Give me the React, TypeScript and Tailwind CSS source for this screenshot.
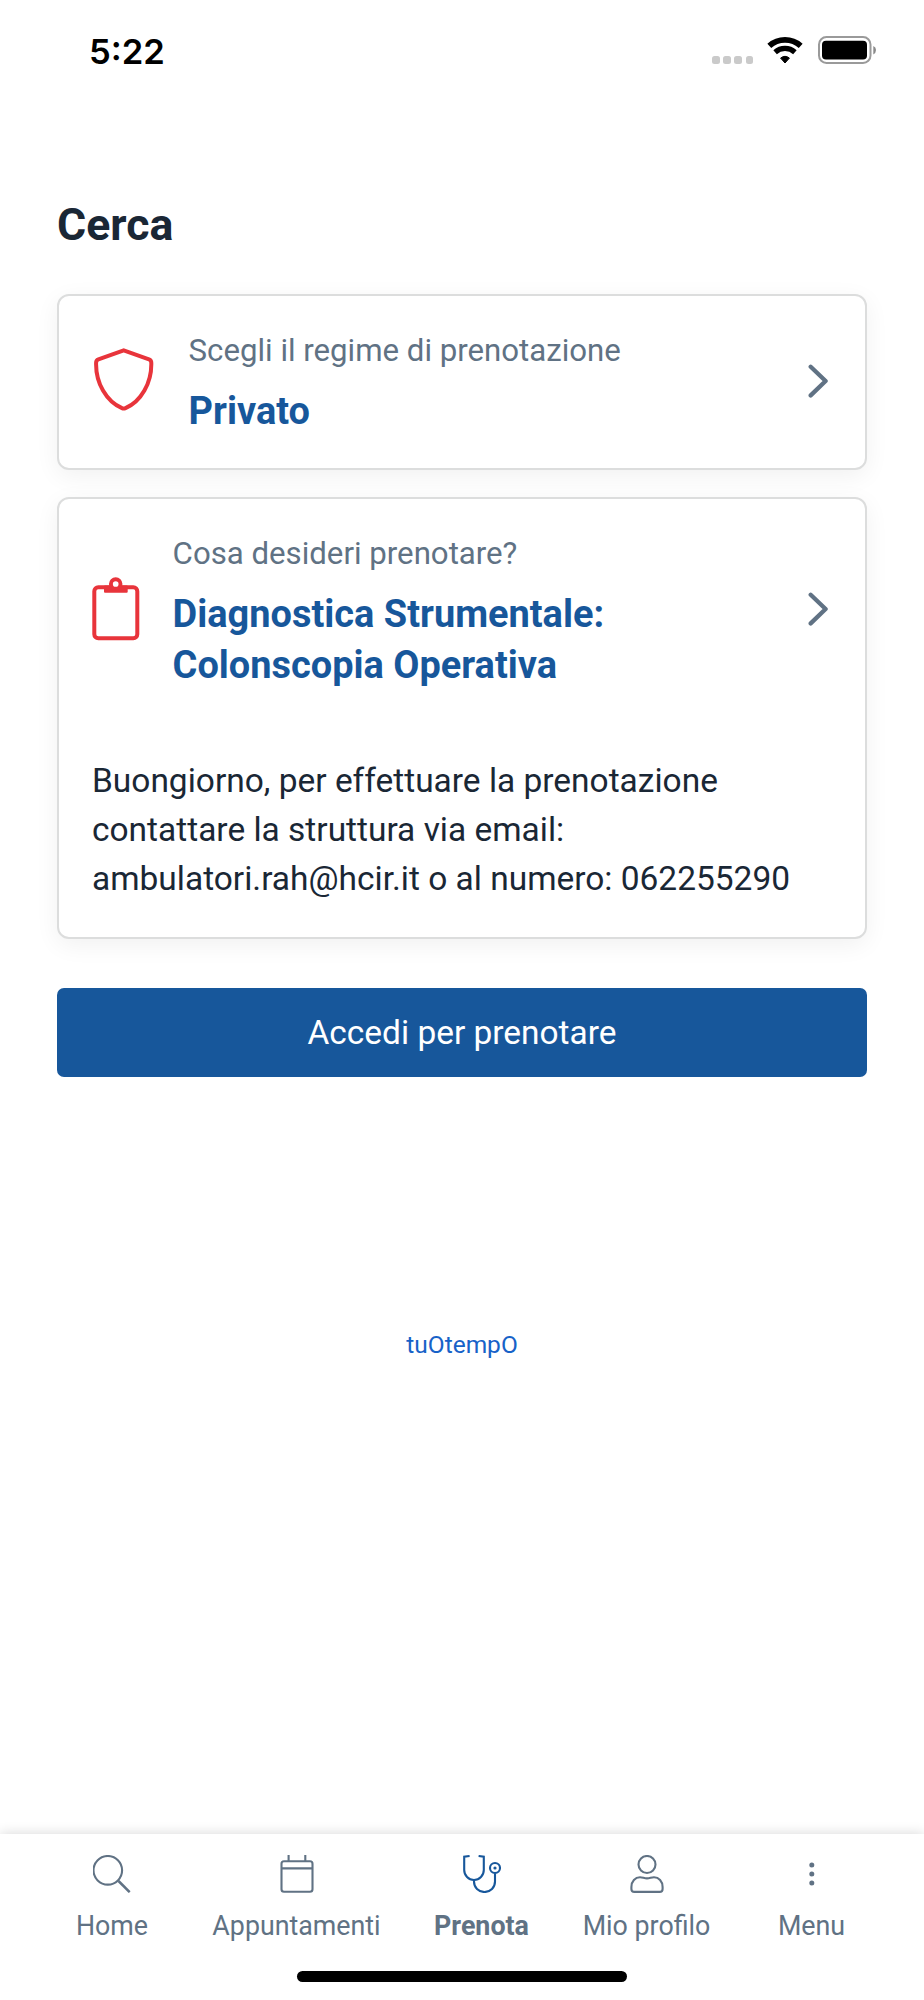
import React from 'react';

interface OptionRowProps {
  icon: React.ReactNode;
  label: string;
  value: React.ReactNode;
}

interface NavItemProps {
  label: string;
  className: string;
  active?: boolean;
  children: React.ReactNode;
}

function ShieldIcon() {
  return (
    <svg width="63" height="63" viewBox="0 0 63 63" className="shrink-0 -mt-[7px]" fill="none" stroke="#e8343b" strokeWidth="4" strokeLinejoin="round">
      <path d="M31.7 2.3 57 11.3Q59.3 12.2 59.3 14.7C59.8 35 49 53.5 33.5 60.2Q31.7 61 30 60.2C14.4 53.5 3.6 35 4.1 14.7Q4.1 12.2 6.4 11.3Z" />
    </svg>
  );
}

function ClipboardIcon() {
  return (
    <svg width="48" height="64" viewBox="0 0 48 64" className="shrink-0 -mt-[5px] -mr-px" fill="none">
      <rect x="2.3" y="10.2" width="43" height="51" rx="4" stroke="#e8343b" strokeWidth="4" />
      <rect x="12" y="8.4" width="23.7" height="7.4" rx="1" fill="#e8343b" />
      <circle cx="23.7" cy="7" r="4.8" fill="#fff" stroke="#e8343b" strokeWidth="3.9" />
    </svg>
  );
}

function ChevronIcon() {
  return (
    <svg width="20" height="34" viewBox="0 0 20 34" className="ml-auto shrink-0 -mt-[5px]" fill="none" stroke="#607284" strokeWidth="4.3" strokeLinecap="round" strokeLinejoin="round">
      <path d="M2.7 2.7 17.6 17 2.7 31.4" />
    </svg>
  );
}

function OptionRow({ icon, label, value }: OptionRowProps) {
  return (
    <div className="flex items-center pt-[34px] pb-[31px] pl-[33px] pr-[37px]">
      {icon}
      <div className="ml-[33.6px]">
        <p className="text-[31.2px] leading-[42px] text-[#607284]">{label}</p>
        <p className="mt-[14px] -mb-px text-[37.95px] leading-[51.4px] font-bold text-[#17579b]">{value}</p>
      </div>
      <ChevronIcon />
    </div>
  );
}

function NavItem({ label, className, active, children }: NavItemProps) {
  return (
    <button className={`flex flex-col items-center gap-[17px] ${className}`}>
      <svg width="38" height="38" viewBox="0 0 38 38" fill="none" stroke={active ? '#17579b' : '#607284'} strokeWidth="2.1">
        {children}
      </svg>
      <span className={active ? 'text-[26.8px] leading-8 font-bold' : 'text-[26.8px] leading-8'}>{label}</span>
    </button>
  );
}

function StatusBar() {
  return (
    <header className="flex h-[100px] items-start justify-between pl-[89px] pr-12 text-black">
      <span className="mt-[31px] font-['Inter',sans-serif] text-[34.6px] leading-10 font-semibold">5:22</span>
      <div className="mt-9 flex">
        <div className="mt-5 mr-[47px] flex w-[8px] gap-[3.6px]">
          <i className="size-[7.6px] shrink-0 rounded-[2.5px] bg-[#cacaca]" />
          <i className="size-[7.6px] shrink-0 rounded-[2.5px] bg-[#cacaca]" />
          <i className="size-[7.6px] shrink-0 rounded-[2.5px] bg-[#cacaca]" />
          <i className="size-[7.6px] shrink-0 rounded-[2.5px] bg-[#cacaca]" />
        </div>
        <svg width="36" height="28" viewBox="0 0 36 28" fill="none" stroke="#000">
          <path d="M2.3 9.9A23.7 23.7 0 0 1 33.7 9.9" strokeWidth="5.8" />
          <path d="M8.1 16.2A15 15 0 0 1 27.9 16.2" strokeWidth="5.3" />
          <path d="M18 27 13.6 22.1A7 7 0 0 1 22.4 22.1Z" fill="#000" strokeWidth="1" strokeLinejoin="round" />
        </svg>
        <svg width="58" height="28" viewBox="0 0 58 28" className="ml-[15px]">
          <rect x="1" y="1" width="51.5" height="26" rx="7.5" fill="none" stroke="#9a9a9a" strokeWidth="2" />
          <rect x="4" y="4.7" width="45" height="18.8" rx="4" />
          <path d="M55.3 10Q58 11 58 14T55.3 18.5Z" fill="#8a8a8a" />
        </svg>
      </div>
    </header>
  );
}

export default function App() {
  return (
    <div className="flex h-[2000px] w-[924px] flex-col overflow-hidden bg-white font-['Roboto',sans-serif] text-[#1a2735]">
      <StatusBar />

      <main className="flex flex-col px-[57px] pt-[98px]">
        <h1 className="text-[44.6px] leading-[54px] font-bold">Cerca</h1>

        <section className="mt-[42px] h-[176px] rounded-xl border-2 border-[#dcdddd] bg-white shadow-[0_6px_24px_rgba(0,0,0,0.06)]">
          <OptionRow icon={<ShieldIcon />} label="Scegli il regime di prenotazione" value="Privato" />
        </section>

        <section className="mt-[27px] h-[442px] rounded-xl border-2 border-[#dcdddd] bg-white shadow-[0_6px_24px_rgba(0,0,0,0.06)]">
          <OptionRow
            icon={<ClipboardIcon />}
            label="Cosa desideri prenotare?"
            value={
              <>
                Diagnostica Strumentale:
                <br />
                Colonscopia Operativa
              </>
            }
          />
          <p className="mt-[34px] px-[33px] text-[33.48px] leading-[49.2px]">
            Buongiorno, per effettuare la prenotazione
            <br />
            contattare la struttura via email:
            <br />
            ambulatori.rah@hcir.it o al numero: 062255290
          </p>
        </section>

        <button className="mt-[49px] h-[89px] rounded-[7px] bg-[#17579b] pt-0.5 text-[33.45px] text-white">
          Accedi per prenotare
        </button>

        <a className="mt-[250px] text-center text-[24.5px] leading-9 text-[#1762c8]">tuOtempO</a>
      </main>

      <footer className="mt-auto flex h-[166px] flex-col items-center bg-white pt-[21px] text-[#607284] shadow-[0_0_12px_rgba(0,0,0,0.16)]">
        <nav className="flex">
          <NavItem label="Home" className="w-[160px]">
            <circle cx="14.8" cy="15.3" r="14.3" />
            <path d="M25.5 26 36.7 37.2" strokeWidth="2.5" />
          </NavItem>
          <NavItem label="Appuntamenti" className="w-[209px]">
            <rect x="3.5" y="6.3" width="31" height="30.4" rx="2.5" />
            <path d="M3.5 13.4H34.5M10.6 0V6M27.3 0V6" />
          </NavItem>
          <NavItem label="Prenota" className="w-[161px]" active>
            <path d="M6.6 1 1.2 1.7V15C1.2 20.5 5.5 25 11 25S20.8 20.5 20.8 15V1.7L15.6 1" />
            <path d="M11 25V26.5C11 32.5 15.5 37 21.5 37S32 32.5 32 26.5V18.3" />
            <circle cx="32" cy="13" r="5" />
            <circle cx="32" cy="13" r="1.6" fill="#17579b" stroke="none" />
          </NavItem>
          <NavItem label="Mio profilo" className="w-[169px]">
            <circle cx="19" cy="9.5" r="8.5" />
            <path d="M3.4 34V32C3.4 26.3 7.2 22.3 12 22.3C14.8 22.3 16 23.4 19 23.4S23.2 22.3 26 22.3C30.8 22.3 34.6 26.3 34.6 32V34Q34.6 36.9 31.7 36.9H6.3Q3.4 36.9 3.4 34Z" />
          </NavItem>
          <NavItem label="Menu" className="w-[161px]">
            <g fill="#607284" stroke="none">
              <circle cx="18.8" cy="10" r="2.5" />
              <circle cx="18.8" cy="19" r="2.5" />
              <circle cx="18.8" cy="28" r="2.5" />
            </g>
          </NavItem>
        </nav>
        <div className="mt-[29px] h-[11px] w-[330px] rounded-full bg-black" />
      </footer>
    </div>
  );
}
